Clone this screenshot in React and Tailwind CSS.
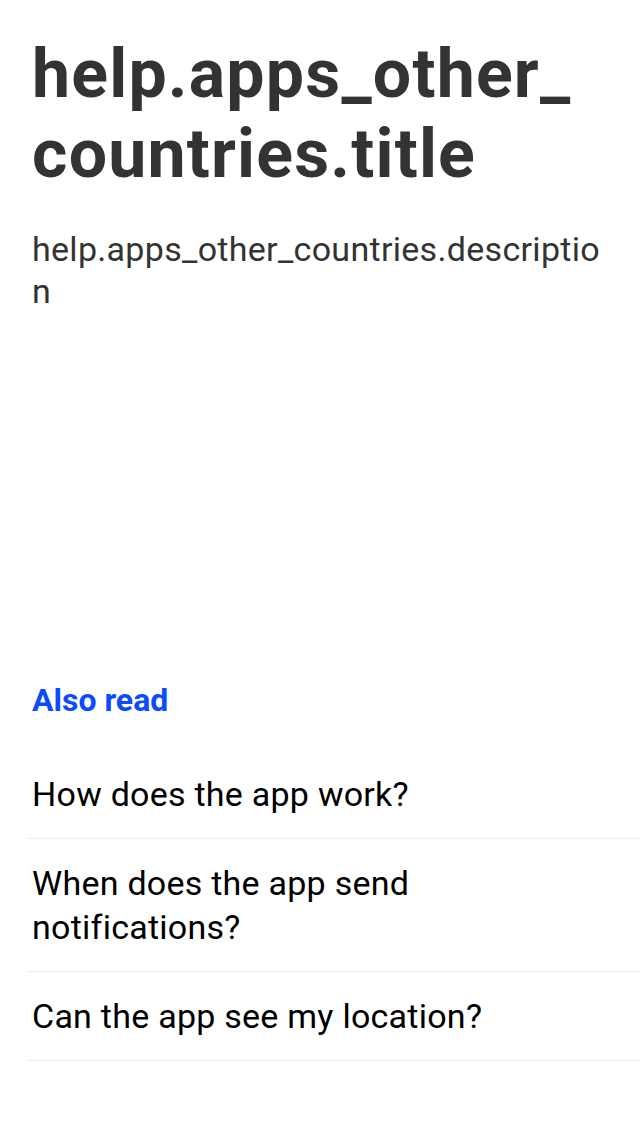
import React from 'react';

// Help article screen: title, description, then "Also read" links
const related = [
  'How does the app work?',
  'When does the app send notifications?',
  'Can the app see my location?',
];

export default function App() {
  return (
    <div className="min-h-[1136px] w-[640px] bg-white font-['Roboto','Liberation_Sans',sans-serif]">
      {/* Article header */}
      <div className="px-8 pt-[34px]">
        <h1 className="text-[68px] leading-[80px] font-bold text-[#333333] tracking-[1.2px] break-words">
          help.apps_other_<wbr />countries.title
        </h1>
        <p className="mt-[34px] text-[34px] leading-[42px] text-[#333333] tracking-[0.3px] break-words">
          help.apps_other_countries.description
        </p>
      </div>

      {/* Also read */}
      <div className="mt-[369px]">
        <h2 className="px-8 text-[32px] leading-[38px] font-bold text-[#0a4bff]">Also read</h2>
        <ul className="mt-[31px] pl-7">
          {related.map((q) => (
            <li
              key={q}
              className="border-b border-[#ebebf0] pl-1 pr-8 py-[22px] text-[34px] leading-[44px] tracking-[0.25px] text-black"
            >
              {q}
            </li>
          ))}
        </ul>
      </div>
    </div>
  );
}
